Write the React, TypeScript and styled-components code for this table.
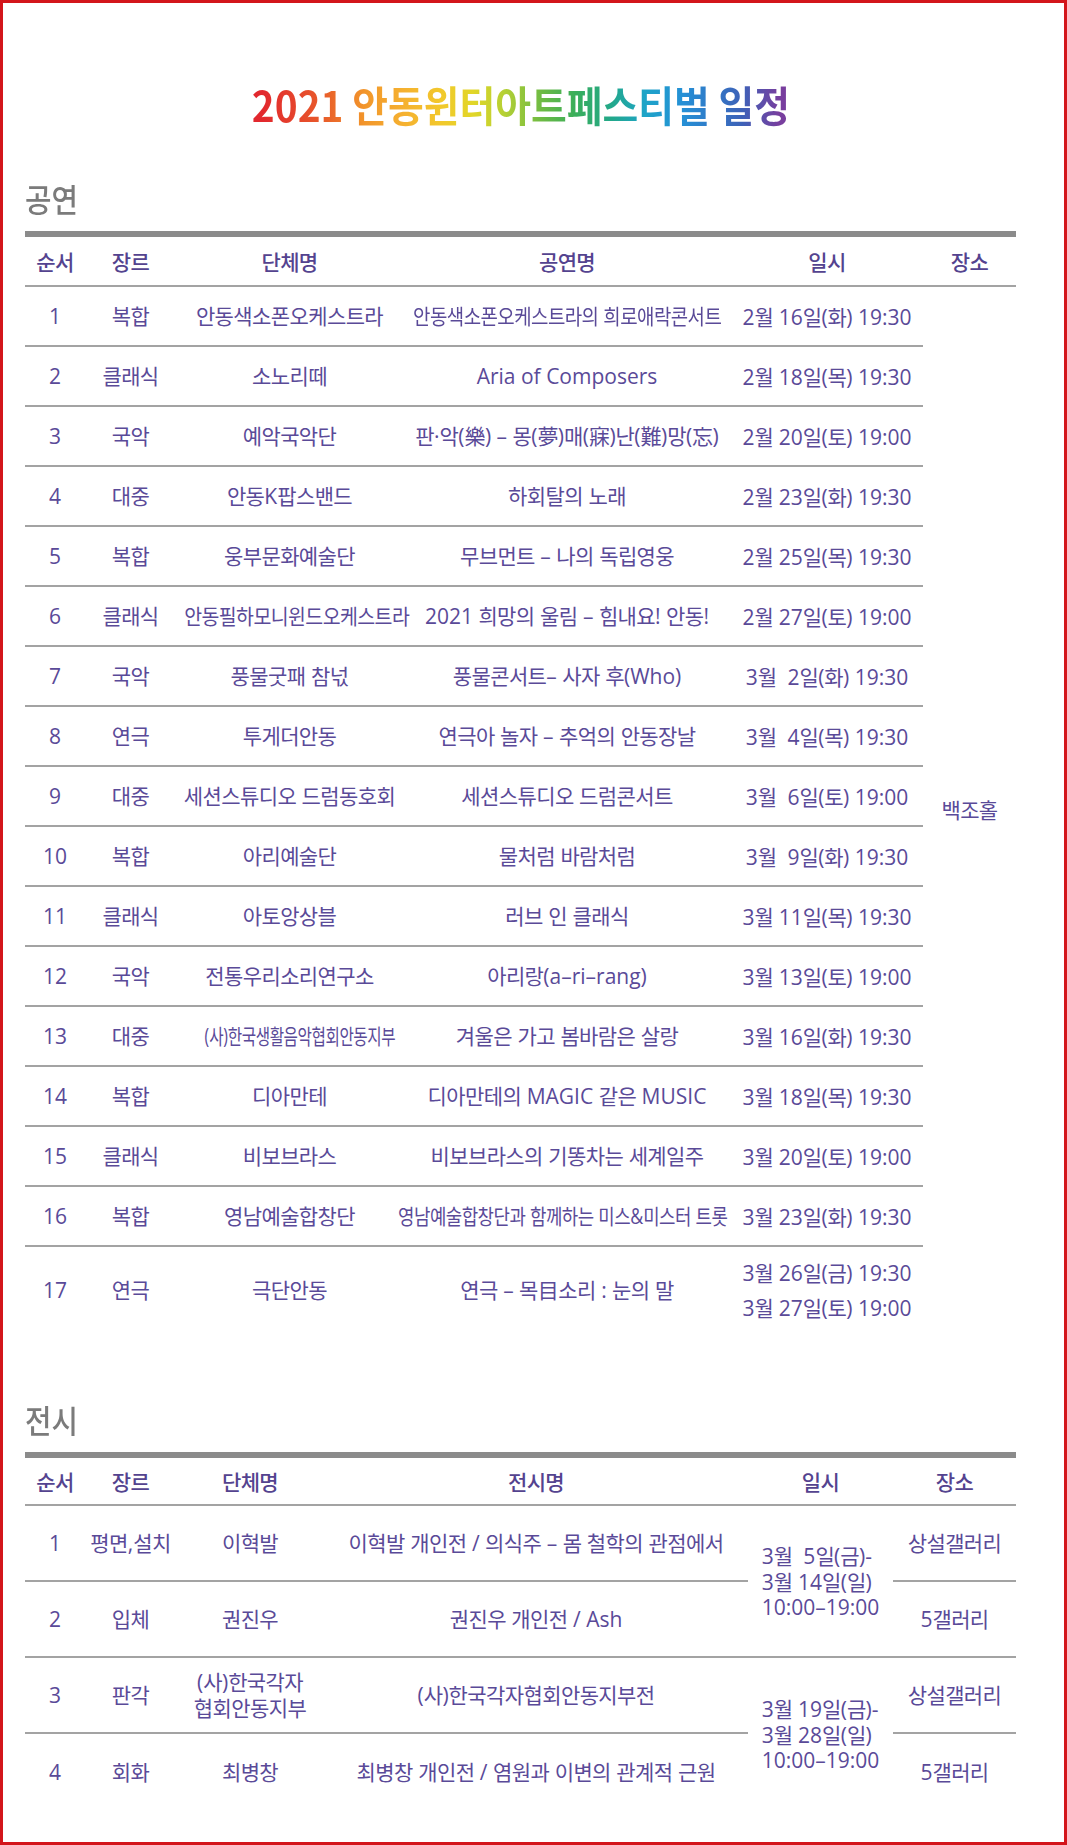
import React from "react";
import styled, { createGlobalStyle } from "styled-components";

const GlobalStyle = createGlobalStyle`
  *, *::before, *::after { box-sizing: border-box; }
  html, body { margin: 0; padding: 0; background: #ffffff; }
  body { font-family: "Open Sans", "Noto Sans CJK KR", sans-serif; }
`;

const Frame = styled.div`
  width: 1067px;
  height: 1845px;
  border: 3px solid #d3151b;
  padding: 0 48px 0 22px;
  background: #ffffff;
`;

const Title = styled.h1`
  margin: 77px 0 0;
  height: 48px;
  line-height: 48px;
  text-align: center;
  font-family: "Noto Sans CJK KR", sans-serif;
  font-size: 42px;
  font-weight: 700;
`;

const TitleText = styled.span`
  display: inline-block;
  transform: scaleX(0.925);
  background: linear-gradient(
    90deg,
    #e2282e 2%,
    #e85a2a 13%,
    #f2962b 21%,
    #f5b030 28%,
    #f2c82c 35%,
    #e2d628 41%,
    #b4d034 47%,
    #6cba44 54%,
    #3aae5a 60%,
    #22a88c 67%,
    #1ea4c8 73%,
    #2590d6 80%,
    #3d62b8 91%,
    #783e9e 98%
  );
  -webkit-background-clip: text;
  background-clip: text;
  color: transparent;
`;

const Section = styled.section<{ $gap: number }>`
  margin-top: ${(p) => p.$gap}px;
`;

const SectionTitle = styled.h2`
  margin: 0 0 15px;
  height: 36px;
  line-height: 36px;
  font-family: "Noto Sans CJK KR", sans-serif;
  font-size: 32px;
  font-weight: 500;
  color: #7b7b7b;
`;

const SectionLabel = styled.span`
  display: inline-block;
  transform: scaleX(0.9);
  transform-origin: left center;
`;

const Table = styled.div<{ $cols: string; $rows: string }>`
  display: grid;
  grid-template-columns: ${(p) => p.$cols};
  grid-template-rows: ${(p) => p.$rows};
  border-top: 6px solid #8b8b8b;
`;

const Th = styled.div`
  display: flex;
  align-items: center;
  justify-content: center;
  border-bottom: 2px solid #a3a3a3;
  font-family: "Noto Sans CJK KR", sans-serif;
  font-size: 21px;
  font-weight: 500;
  letter-spacing: -0.6px;
  color: #54438f;
`;

const Td = styled.div<{ $span?: number; $line?: boolean; $lh?: number }>`
  grid-row: span ${(p) => p.$span ?? 1};
  display: flex;
  flex-direction: column;
  align-items: center;
  justify-content: center;
  text-align: center;
  border-bottom: ${(p) => (p.$line ? "2px solid #a3a3a3" : "none")};
  font-size: 21px;
  line-height: ${(p) => p.$lh ?? 25}px;
  white-space: pre;
  color: #5a4a98;
`;

const Line = styled.span<{ $k?: number; $dx?: number }>`
  display: block;
  transform: translateX(${(p) => p.$dx ?? 0}px) scaleX(${(p) => p.$k ?? 1});
`;

const DateBlock = styled.div`
  text-align: left;
`;

const Han = styled.span`
  font-family: "Noto Sans CJK KR", sans-serif;
  font-size: 21px;
  letter-spacing: -0.6px;
`;

const CJK_RUN = /([\u3131-\u318E\uAC00-\uD7A3\u4E00-\u9FFF]+)/;

function mixed(text: string): React.ReactNode[] {
  return text
    .split(CJK_RUN)
    .map((part, i) => (i % 2 === 1 ? <Han key={i}>{part}</Han> : part));
}

type Perf = {
  no: number;
  genre: string;
  group: string;
  title: string;
  dates: string[];
  gk?: number;
  gdx?: number;
  tk?: number;
  tdx?: number;
};

const perf: Perf[] = [
  { no: 1, genre: "복합", group: "안동색소폰오케스트라", title: "안동색소폰오케스트라의 희로애락콘서트", dates: ["2월 16일(화) 19:30"], tk: 0.9 },
  { no: 2, genre: "클래식", group: "소노리떼", title: "Aria of Composers", dates: ["2월 18일(목) 19:30"] },
  { no: 3, genre: "국악", group: "예악국악단", title: "판·악(樂) – 몽(夢)매(寐)난(難)망(忘)", dates: ["2월 20일(토) 19:00"] },
  { no: 4, genre: "대중", group: "안동K팝스밴드", title: "하회탈의 노래", dates: ["2월 23일(화) 19:30"] },
  { no: 5, genre: "복합", group: "웅부문화예술단", title: "무브먼트 – 나의 독립영웅", dates: ["2월 25일(목) 19:30"] },
  { no: 6, genre: "클래식", group: "안동필하모니윈드오케스트라", title: "2021 희망의 울림 – 힘내요! 안동!", dates: ["2월 27일(토) 19:00"], gk: 0.925, gdx: 7 },
  { no: 7, genre: "국악", group: "풍물굿패 참넋", title: "풍물콘서트– 사자 후(Who)", dates: ["3월  2일(화) 19:30"] },
  { no: 8, genre: "연극", group: "투게더안동", title: "연극아 놀자 – 추억의 안동장날", dates: ["3월  4일(목) 19:30"] },
  { no: 9, genre: "대중", group: "세션스튜디오 드럼동호회", title: "세션스튜디오 드럼콘서트", dates: ["3월  6일(토) 19:00"] },
  { no: 10, genre: "복합", group: "아리예술단", title: "물처럼 바람처럼", dates: ["3월  9일(화) 19:30"] },
  { no: 11, genre: "클래식", group: "아토앙상블", title: "러브 인 클래식", dates: ["3월 11일(목) 19:30"] },
  { no: 12, genre: "국악", group: "전통우리소리연구소", title: "아리랑(a–ri–rang)", dates: ["3월 13일(토) 19:00"] },
  { no: 13, genre: "대중", group: "(사)한국생활음악협회안동지부", title: "겨울은 가고 봄바람은 살랑", dates: ["3월 16일(화) 19:30"], gk: 0.745, gdx: 10 },
  { no: 14, genre: "복합", group: "디아만테", title: "디아만테의 MAGIC 같은 MUSIC", dates: ["3월 18일(목) 19:30"] },
  { no: 15, genre: "클래식", group: "비보브라스", title: "비보브라스의 기똥차는 세계일주", dates: ["3월 20일(토) 19:00"] },
  { no: 16, genre: "복합", group: "영남예술합창단", title: "영남예술합창단과 함께하는 미스&미스터 트롯", dates: ["3월 23일(화) 19:30"], tk: 0.85, tdx: -4 },
  { no: 17, genre: "연극", group: "극단안동", title: "연극 – 목目소리 : 눈의 말", dates: ["3월 26일(금) 19:30", "3월 27일(토) 19:00"] },
];

type Exhibit = {
  no: number;
  genre: string;
  group: string[];
  title: string;
  dates?: string[];
  venue: string;
};

const exhibits: Exhibit[] = [
  { no: 1, genre: "평면,설치", group: ["이혁발"], title: "이혁발 개인전 / 의식주 – 몸 철학의 관점에서", dates: ["3월  5일(금)-", "3월 14일(일)", "10:00–19:00"], venue: "상설갤러리" },
  { no: 2, genre: "입체", group: ["권진우"], title: "권진우 개인전 / Ash", venue: "5갤러리" },
  { no: 3, genre: "판각", group: ["(사)한국각자", "협회안동지부"], title: "(사)한국각자협회안동지부전", dates: ["3월 19일(금)-", "3월 28일(일)", "10:00–19:00"], venue: "상설갤러리" },
  { no: 4, genre: "회화", group: ["최병창"], title: "최병창 개인전 / 염원과 이변의 관계적 근원", venue: "5갤러리" },
];

const perfHeads = ["순서", "장르", "단체명", "공연명", "일시", "장소"];
const exHeads = ["순서", "장르", "단체명", "전시명", "일시", "장소"];

export default function App() {
  return (
    <>
      <GlobalStyle />
      <Frame>
        <Title>
          <TitleText>2021 안동윈터아트페스티벌 일정</TitleText>
        </Title>

        <Section $gap={52}>
          <SectionTitle>
            <SectionLabel>공연</SectionLabel>
          </SectionTitle>
          <Table $cols="60px 91px 227px 328px 192px 93px" $rows="50px repeat(16, 60px) 86px">
            {perfHeads.map((h) => (
              <Th key={h}>{h}</Th>
            ))}
            {perf.map((r, i) => {
              const line = i < perf.length - 1;
              return (
                <React.Fragment key={r.no}>
                  <Td $line={line}>
                    <Line>{r.no}</Line>
                  </Td>
                  <Td $line={line}>
                    <Line>{mixed(r.genre)}</Line>
                  </Td>
                  <Td $line={line}>
                    <Line $k={r.gk} $dx={r.gdx}>{mixed(r.group)}</Line>
                  </Td>
                  <Td $line={line}>
                    <Line $k={r.tk} $dx={r.tdx}>{mixed(r.title)}</Line>
                  </Td>
                  <Td $line={line} $lh={34}>
                    {r.dates.map((d) => (
                      <Line key={d}>{mixed(d)}</Line>
                    ))}
                  </Td>
                  {i === 0 && (
                    <Td $span={perf.length}>
                      <Line>{mixed("백조홀")}</Line>
                    </Td>
                  )}
                </React.Fragment>
              );
            })}
          </Table>
        </Section>

        <Section $gap={68}>
          <SectionTitle>
            <SectionLabel>전시</SectionLabel>
          </SectionTitle>
          <Table $cols="60px 91px 148px 424px 145px 123px" $rows="48px repeat(4, 76px)">
            {exHeads.map((h) => (
              <Th key={h}>{h}</Th>
            ))}
            {exhibits.map((r, i) => {
              const line = i < exhibits.length - 1;
              return (
                <React.Fragment key={r.no}>
                  <Td $line={line}>
                    <Line>{r.no}</Line>
                  </Td>
                  <Td $line={line}>
                    <Line>{mixed(r.genre)}</Line>
                  </Td>
                  <Td $line={line}>
                    {r.group.map((g) => (
                      <Line key={g}>{mixed(g)}</Line>
                    ))}
                  </Td>
                  <Td $line={line}>
                    <Line>{mixed(r.title)}</Line>
                  </Td>
                  {r.dates && (
                    <Td $span={2} $line={i + 2 < exhibits.length}>
                      <DateBlock>
                        {r.dates.map((d) => (
                          <Line key={d}>{mixed(d)}</Line>
                        ))}
                      </DateBlock>
                    </Td>
                  )}
                  <Td $line={line}>
                    <Line>{mixed(r.venue)}</Line>
                  </Td>
                </React.Fragment>
              );
            })}
          </Table>
        </Section>
      </Frame>
    </>
  );
}
